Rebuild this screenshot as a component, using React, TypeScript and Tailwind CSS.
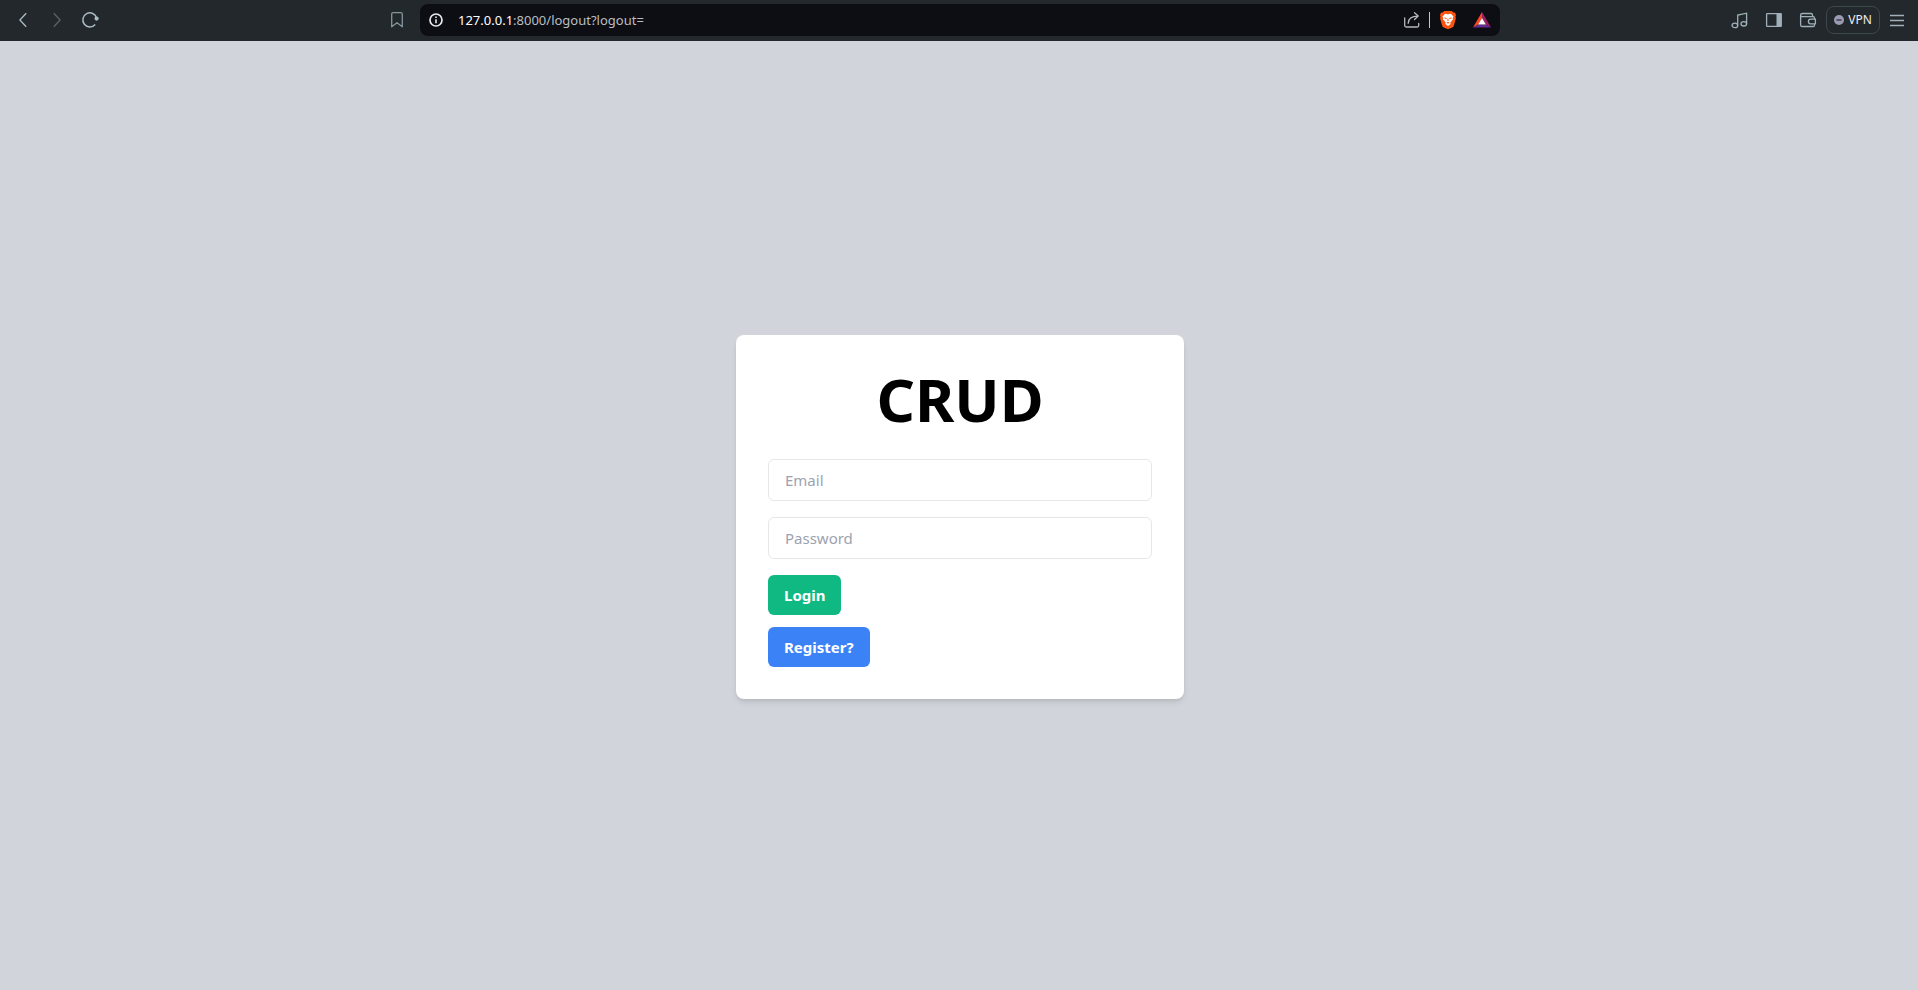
import type { ReactNode } from "react";

function ToolButton({ label, children }: { label: string; children: ReactNode }) {
  return (
    <button type="button" aria-label={label} className="flex h-8 w-[34px] shrink-0 items-center justify-center">
      {children}
    </button>
  );
}

const line = { fill: "none", stroke: "currentColor", strokeWidth: 1.3 } as const;

function BackIcon() {
  return (
    <svg width="20" height="20" viewBox="0 0 20 20" {...line}>
      <path d="M13.2 3.2 6.9 10l6.3 6.8" />
    </svg>
  );
}

function ForwardIcon() {
  return (
    <svg width="20" height="20" viewBox="0 0 20 20" {...line}>
      <path d="M6.8 3.2 13.1 10l-6.3 6.8" />
    </svg>
  );
}

function ReloadIcon() {
  return (
    <svg width="20" height="20" viewBox="0 0 20 20" {...line} strokeWidth="1.5">
      <path d="M14.2 14.4A7 7 0 1 1 15.6 8" />
      <circle cx="15.6" cy="8.6" r="2.1" fill="currentColor" stroke="none" />
    </svg>
  );
}

function BookmarkIcon() {
  return (
    <svg width="20" height="20" viewBox="0 0 20 20" {...line} strokeLinejoin="round">
      <path d="M4.700 4.100c0-.9.6-1.500 1.500-1.500h7.600c.9 0 1.500.6 1.500 1.500v12.700L10 12.700l-5.300 4.100z" />
    </svg>
  );
}

function InfoIcon() {
  return (
    <svg width="16" height="16" viewBox="0 0 16 16" fill="none" stroke="currentColor" strokeWidth="1.7">
      <circle cx="8" cy="8" r="6" />
      <path d="M8 7.200v4" strokeWidth="1.600" />
      <path d="M8 4.500v1.500" strokeWidth="1.600" />
    </svg>
  );
}

function ShareIcon() {
  return (
    <svg width="20" height="20" viewBox="0 0 20 20" {...line} strokeLinecap="round" strokeLinejoin="round">
      <path d="M1.700 8v7.500c0 .9.600 1.500 1.500 1.500h11c.9 0 1.500-.6 1.500-1.500V13.500" />
      <path d="M5.200 13.300c.1-4.800 3.200-7.200 9.600-7.200M11.500 2.800l3.700 3.300-3.700 3.400" />
    </svg>
  );
}

function BraveIcon() {
  return (
    <svg width="18" height="20" viewBox="0 0 18 20">
      <path d="M5.200 1h7.600l1.600 1.600 1.600-.1 1 2.700-.5 1.300.4 1.700-2 7.300c-.3 1-.8 1.500-1.600 2L9 19.200l-4.300-1.700c-.8-.5-1.300-1-1.600-2l-2-7.300.4-1.700L1 5.200l1-2.700 1.600.1z" fill="#fb5410" />
      <path d="M9 4.300 6.100 3.700 3.500 6.500l.7 1.400-.2 1.300 2.700 3.200-.3 1.500L9 16l2.600-2.100-.3-1.500L14 9.200l-.2-1.300.7-1.400-2.600-2.800z" fill="#fff" />
      <path d="m5.300 7.500 2.700.6-.6.800-1.800-.4zM12.700 7.500l-2.700.6.600.8 1.800-.4zM8.600 8.800h.8l.2 2-.6.500-.6-.5zM7.300 12.600 9 12l1.700.6L9 13.700z" fill="#fb5410" />
    </svg>
  );
}

function RewardsIcon() {
  return (
    <svg width="20" height="18" viewBox="0 0 20 18">
      <path d="M10 1 1 16.500l5.200-3L10 7z" fill="#ff4724" />
      <path d="m10 1 9 15.500-5.200-3L10 7z" fill="#9e1f63" />
      <path d="M1 16.500h18l-5.200-3H6.200z" fill="#662d91" />
      <path d="m10 6.900 3.900 6.700H6.100z" fill="#fff" />
    </svg>
  );
}

function MusicIcon() {
  return (
    <svg width="20" height="20" viewBox="0 0 20 20" {...line}>
      <ellipse cx="4.900" cy="15.400" rx="2.800" ry="2.200" />
      <ellipse cx="13.800" cy="13.800" rx="2.800" ry="2.200" />
      <path d="M7.700 15.400V5.100l8.900-1.900v10.600" />
    </svg>
  );
}

function SidebarIcon() {
  return (
    <svg width="20" height="20" viewBox="0 0 20 20" {...line}>
      <rect x="2.600" y="3.600" width="14.600" height="12.800" rx=".6" />
      <path d="M12.500 3.500h5v13h-5z" fill="currentColor" stroke="none" />
    </svg>
  );
}

function WalletIcon() {
  return (
    <svg width="20" height="20" viewBox="0 0 20 20" {...line} strokeLinejoin="round">
      <path d="M16.500 9.200V7.900c0-.8-.5-1.300-1.300-1.300H4.100c-.9 0-1.500-.5-1.500-1.300v9.600c0 1 .6 1.600 1.600 1.600h11c.8 0 1.300-.5 1.300-1.300v-1.400" />
      <path d="M2.600 5.300c0-1.200.6-1.800 1.600-1.800h8.900c.9 0 1.400.5 1.400 1.400v1.700" />
      <path d="M17.400 9.200h-4.700a2.300 2.300 0 0 0 0 4.600h4.700z" />
    </svg>
  );
}

function MenuIcon() {
  return (
    <svg width="20" height="20" viewBox="0 0 20 20" {...line}>
      <path d="M3 5.500h14M3 10.500h14M3 15.500h14" />
    </svg>
  );
}

function BrowserBar() {
  return (
    <header className="grid h-[41px] shrink-0 grid-cols-[1fr_minmax(0,1080px)_1fr] items-center bg-[#23282c] pb-px pl-0.5 text-[#9fb0b8]">
      <nav aria-label="Navigation" className="flex items-center pr-1.5 pl-1">
        <span className="contents text-[#a9bcc4]">
          <ToolButton label="Back"><BackIcon /></ToolButton>
        </span>
        <span className="contents text-[#5c6366]">
          <ToolButton label="Forward"><ForwardIcon /></ToolButton>
        </span>
        <span className="contents text-[#a9bcc4]">
          <ToolButton label="Reload"><ReloadIcon /></ToolButton>
        </span>
        <span className="ml-auto text-[#84949c]">
          <ToolButton label="Bookmark this page"><BookmarkIcon /></ToolButton>
        </span>
      </nav>

      <div className="flex h-8 items-center rounded-lg bg-[#0d0e13] pr-px pl-2 text-[#e8eaed]">
        <button type="button" aria-label="Site information"><InfoIcon /></button>
        <a href="#" className="ml-3.5 flex-1 text-[13px] leading-5 text-[#b9bec4]">
          <span className="text-white">127.0.0.1</span>:8000/logout?logout=
        </a>
        <span className="contents text-[#b4b7bb]">
          <ToolButton label="Share"><ShareIcon /></ToolButton>
        </span>
        <span className="mr-px -ml-px h-4 w-px bg-[#c3c6ca]" />
        <ToolButton label="Shields"><BraveIcon /></ToolButton>
        <ToolButton label="Rewards"><RewardsIcon /></ToolButton>
      </div>

      <div className="flex items-center justify-end pr-1">
        <ToolButton label="Media controls"><MusicIcon /></ToolButton>
        <ToolButton label="Sidebar"><SidebarIcon /></ToolButton>
        <ToolButton label="Wallet"><WalletIcon /></ToolButton>
        <button
          type="button"
          className="ml-px flex h-7 w-[54px] items-center justify-center gap-1 rounded-lg border border-[#3d484d] text-xs text-[#edeff2]"
        >
          <svg width="10" height="10" viewBox="0 0 10 10" className="shrink-0">
            <circle cx="5" cy="5" r="5" fill="#9a9bb3" />
            <path d="M2.500 5h5" stroke="#23282c" strokeWidth="1.200" />
          </svg>
          VPN
        </button>
        <ToolButton label="Menu"><MenuIcon /></ToolButton>
      </div>
    </header>
  );
}

const field =
  "block w-full rounded-md border border-gray-200 bg-white px-4 py-2 text-[15px] leading-6 text-black placeholder:text-[#9ca3af]";
const action = "rounded-md px-4 py-2 text-[15px] leading-6 font-bold text-white";

export default function App() {
  return (
    <div className="flex min-h-screen flex-col bg-[#d1d5db] font-['Noto_Sans',sans-serif]">
      <BrowserBar />
      <main className="flex flex-1 items-center justify-center pt-0.5 pl-0.5">
        <section className="w-full max-w-md rounded-lg bg-white p-8 shadow-md">
          <h1 className="mb-7 text-center text-6xl leading-[64px] font-bold text-black">CRUD</h1>
          <form className="flex flex-col items-start" onSubmit={(e) => e.preventDefault()}>
            <input type="email" aria-label="Email" placeholder="Email" className={field} />
            <input type="password" aria-label="Password" placeholder="Password" className={`mt-4 ${field}`} />
            <button type="submit" className={`mt-4 bg-[#10b981] ${action}`}>Login</button>
            <a href="#" className={`mt-3 bg-[#3b82f6] ${action}`}>Register?</a>
          </form>
        </section>
      </main>
    </div>
  );
}
